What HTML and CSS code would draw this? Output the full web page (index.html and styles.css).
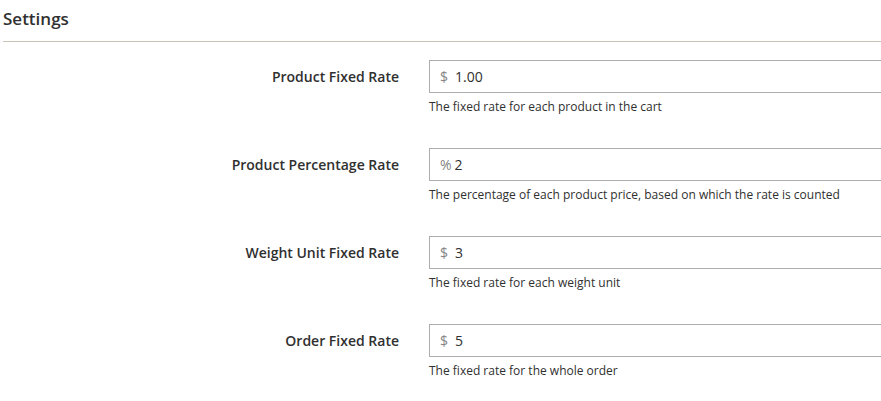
FILE: index.html
```
<!DOCTYPE html>
<html lang="en">
<head>
    <meta charset="UTF-8">
    <meta name="viewport" content="width=device-width, initial-scale=1.0">
    <title>Settings</title>
    <link rel="stylesheet" href="styles.css">
</head>
<body>
    <div class="section">
        <h2 class="section-title">Settings</h2>
        <div class="fields">
            <div class="field">
                <label class="field-label" for="productFixed">Product Fixed Rate</label>
                <div class="field-control">
                    <div class="addon">
                        <span class="prefix">$</span>
                        <input id="productFixed" type="text" value="1.00">
                    </div>
                    <div class="note">The fixed rate for each product in the cart</div>
                </div>
            </div>
            <div class="field">
                <label class="field-label" for="productPercent">Product Percentage Rate</label>
                <div class="field-control">
                    <div class="addon">
                        <span class="prefix prefix-wide">%</span>
                        <input id="productPercent" type="text" value="2">
                    </div>
                    <div class="note">The percentage of each product price, based on which the rate is counted</div>
                </div>
            </div>
            <div class="field">
                <label class="field-label" for="weightFixed">Weight Unit Fixed Rate</label>
                <div class="field-control">
                    <div class="addon">
                        <span class="prefix">$</span>
                        <input id="weightFixed" type="text" value="3">
                    </div>
                    <div class="note">The fixed rate for each weight unit</div>
                </div>
            </div>
            <div class="field">
                <label class="field-label" for="orderFixed">Order Fixed Rate</label>
                <div class="field-control">
                    <div class="addon">
                        <span class="prefix">$</span>
                        <input id="orderFixed" type="text" value="5">
                    </div>
                    <div class="note">The fixed rate for the whole order</div>
                </div>
            </div>
        </div>
    </div>
</body>
</html>
```
FILE: styles.css
```
/* Базовые настройки */
body {
    font-family: "Open Sans", "Liberation Sans", sans-serif;
    margin: 0;
    padding: 0;
    background: #fff;
    color: #303030;
    overflow: hidden;
}

.section {
    padding-left: 3px;
}

.section-title {
    font-size: 17px;
    font-weight: 600;
    color: #303030;
    margin: 0;
    padding: 8px 0 11px;
    line-height: 22px;
    border-bottom: 1px solid #cac3b4;
}

.fields {
    padding-top: 18px;
}

.field {
    display: flex;
    align-items: flex-start;
    margin-bottom: 33px;
}

.field-label {
    flex: 0 0 426px;
    box-sizing: border-box;
    padding-right: 30px;
    text-align: right;
    font-size: 14px;
    font-weight: 600;
    line-height: 33px;
    color: #303030;
}

/* поле уходит за правый край экрана */
.field-control {
    flex: 1;
    min-width: 0;
}

.addon {
    display: flex;
    align-items: center;
    height: 33px;
    box-sizing: border-box;
    border: 1px solid #adadad;
    border-right: none;
    padding-left: 10px;
}

.prefix {
    font-size: 14px;
    color: #858585;
    margin-right: 7px;
}

.prefix-wide {
    margin-right: 3px;
}

.addon input {
    border: none;
    outline: none;
    padding: 0;
    flex: 1;
    min-width: 0;
    font-family: inherit;
    font-size: 14px;
    color: #303030;
    background: transparent;
}

.note {
    font-size: 12px;
    line-height: 17px;
    margin-top: 5px;
    color: #303030;
}
```
